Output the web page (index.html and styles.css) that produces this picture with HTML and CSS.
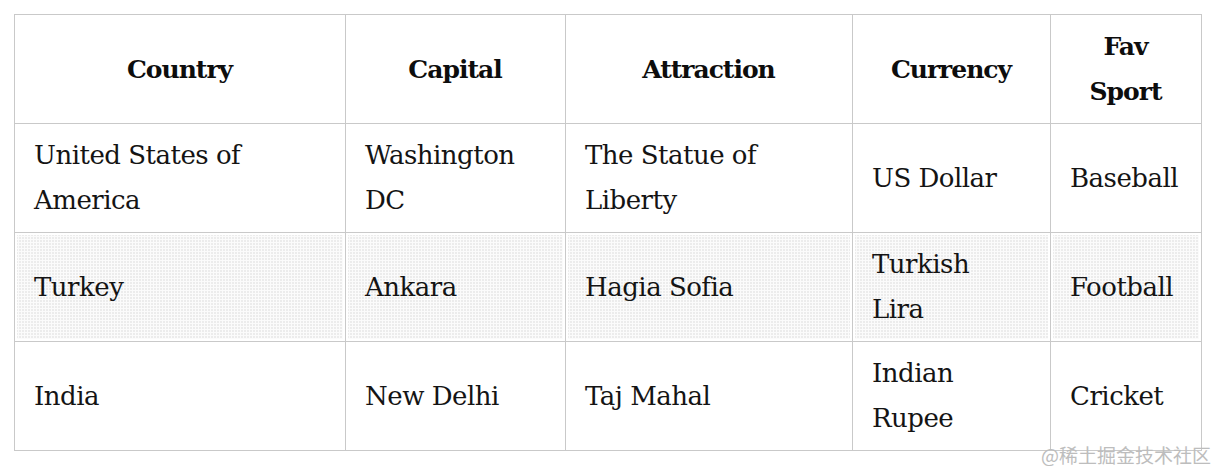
FILE: index.html
```html
<!DOCTYPE html>
<html lang="en">
<head>
<meta charset="utf-8">
<title>Countries</title>
<link rel="stylesheet" href="styles.css">
</head>
<body>
<div class="page">
  <table class="data">
    <colgroup>
      <col class="c1"><col class="c2"><col class="c3"><col class="c4"><col class="c5">
    </colgroup>
    <thead>
      <tr><th>Country</th><th>Capital</th><th>Attraction</th><th>Currency</th><th>Fav Sport</th></tr>
    </thead>
    <tbody>
      <tr><td>United States of America</td><td>Washington DC</td><td>The Statue of Liberty</td><td class="money">US Dollar</td><td>Baseball</td></tr>
      <tr class="striped"><td>Turkey</td><td>Ankara</td><td>Hagia Sofia</td><td class="money">Turkish Lira</td><td>Football</td></tr>
      <tr><td>India</td><td>New Delhi</td><td>Taj Mahal</td><td class="money">Indian Rupee</td><td>Cricket</td></tr>
    </tbody>
  </table>
  <div class="watermark">@稀土掘金技术社区</div>
</div>
</body>
</html>
```
FILE: styles.css
```css
html, body {
  margin: 0;
  padding: 0;
  background: #fff;
}
.page {
  position: relative;
  width: 1217px;
  height: 466px;
  padding: 14px 0 0 14px;
  box-sizing: border-box;
}
.data {
  border-collapse: collapse;
  table-layout: fixed;
  width: 1188px;
  font-family: "DejaVu Serif", "Liberation Serif", serif;
  font-size: 26px;
  line-height: 45px;
  letter-spacing: -0.5px;
  color: #141414;
}
.c1 { width: 331px; }
.c2 { width: 220px; }
.c3 { width: 287px; }
.c4 { width: 198px; }
.c5 { width: 151px; }
.data th, .data td {
  border: 1px solid #c9c9c9;
  padding: 9px 20px 9px 19px;
  height: 90px;
  vertical-align: middle;
}
.data th {
  font-weight: bold;
  font-size: 25px;
  letter-spacing: -1px;
  text-align: center;
  color: #0d0d0d;
}
.data td {
  text-align: left;
  font-weight: normal;
}
.data td.money {
  padding-right: 26px;
}
.striped td {
  background-color: #fbfbfb;
  background-image: radial-gradient(circle, #bdbdbd 0.6px, transparent 0.9px);
  background-size: 3px 3px;
  box-shadow: inset 0 0 0 2px #fff;
}
.watermark {
  position: absolute;
  right: 6px;
  bottom: 0;
  font-family: "Noto Sans CJK SC", "Noto Sans", sans-serif;
  font-size: 19px;
  line-height: 22px;
  color: #bdbdbd;
}
```
